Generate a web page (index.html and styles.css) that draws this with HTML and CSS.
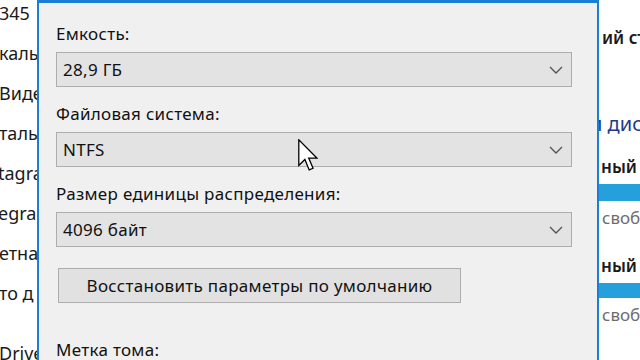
FILE: index.html
```html
<!DOCTYPE html>
<html lang="ru">
<head>
  <meta charset="UTF-8">
  <title>Форматирование</title>
  <link rel="stylesheet" href="styles.css">
</head>
<body>

  <div class="screen">

    <div class="behind-left">
      <div class="item">345</div>
      <div class="item">кальн</div>
      <div class="item">Виде</div>
      <div class="item">таль</div>
      <div class="item shift">tagra</div>
      <div class="item shift">egra</div>
      <div class="item">етна</div>
      <div class="item">то д</div>
      <div class="item drive">Drive</div>
    </div>

    <div class="dialog">
      <div class="field">
        <div class="label">Емкость:</div>
        <div class="combo">
          <span>28,9 ГБ</span>
          <svg class="chevron" width="14" height="8" viewBox="0 0 14 8"><path d="M1 1 L7 7 L13 1" fill="none" stroke="#555" stroke-width="1.4"/></svg>
        </div>
      </div>

      <div class="field">
        <div class="label">Файловая система:</div>
        <div class="combo">
          <span>NTFS</span>
          <svg class="chevron" width="14" height="8" viewBox="0 0 14 8"><path d="M1 1 L7 7 L13 1" fill="none" stroke="#555" stroke-width="1.4"/></svg>
        </div>
      </div>

      <div class="field">
        <div class="label">Размер единицы распределения:</div>
        <div class="combo">
          <span>4096 байт</span>
          <svg class="chevron" width="14" height="8" viewBox="0 0 14 8"><path d="M1 1 L7 7 L13 1" fill="none" stroke="#555" stroke-width="1.4"/></svg>
        </div>
      </div>

      <div class="restore">Восстановить параметры по умолчанию</div>

      <div class="label volume">Метка тома:</div>

      <!-- mouse pointer over the file system combo -->
      <svg class="cursor" width="20" height="32" viewBox="0 0 12.5 20">
        <path d="M0.5 0.5 L0.5 16.5 L4.3 12.8 L7 19.3 L9.4 18.3 L6.7 11.9 L11.8 11.9 Z" fill="#fff" stroke="#000" stroke-width="0.8" stroke-linejoin="miter"/>
      </svg>
    </div>

    <div class="behind-right">
      <div class="folder">ий сто</div>
      <div class="heading">и диски</div>
      <div class="disk">
        <div class="disk-name">ный</div>
        <div class="bar"></div>
        <div class="free">свобо</div>
      </div>
      <div class="disk">
        <div class="disk-name">ный</div>
        <div class="bar"></div>
        <div class="free">свобо</div>
      </div>
    </div>

  </div>

</body>
</html>
```

FILE: styles.css
```css
body {
  margin: 0;
  font-family: "Noto Sans", "Open Sans", sans-serif;
  background: #fff;
  color: #1a1a1a;
}

.screen {
  display: flex;
  width: 640px;
  height: 360px;
  overflow: hidden;
}

/* explorer window behind the dialog */
.behind-left {
  width: 37px;
  flex-shrink: 0;
  overflow: hidden;
  white-space: nowrap;
  font-size: 18px;
}

.item {
  height: 40px;
  line-height: 40px;
  margin-left: -1px;
}

.item:first-child {
  margin-top: -7px;
}

.item.shift {
  margin-left: -2px;
}

.item.drive {
  margin-top: 20px;
}

.behind-right {
  width: 41px;
  flex-shrink: 0;
  overflow: hidden;
  white-space: nowrap;
  font-size: 17px;
}

.folder {
  font-weight: 600;
  margin-top: 27px;
  margin-left: 3px;
  line-height: 22px;
}

.heading {
  color: #1f3a8a;
  font-size: 20px;
  margin-top: 62px;
  margin-left: -9px;
  line-height: 26px;
}

.disk-name {
  font-weight: 600;
  margin-left: 2px;
  line-height: 22px;
  margin-top: 19px;
}

.bar {
  height: 17px;
  background: #26a0da;
  margin-top: 6px;
}

.free {
  color: #6d6d6d;
  margin-left: 3px;
  line-height: 22px;
  margin-top: 6px;
}

.disk + .disk .disk-name {
  margin-top: 26px;
}

.disk + .disk .bar {
  height: 15px;
}

/* format dialog */
.dialog {
  position: relative;
  width: 541px;
  flex-shrink: 0;
  background: #f0f0f0;
  border-left: 2px solid #1a7fd4;
  border-right: 2px solid #1a7fd4;
  border-top: 3px solid #1a7fd4;
  padding: 4px 0 0 17px;
  font-size: 17px;
  letter-spacing: 0.3px;
  color: #111;
}

.label {
  padding-top: 17px;
  line-height: 20px;
  margin-bottom: 8px;
}

.combo {
  display: flex;
  align-items: center;
  justify-content: space-between;
  width: 500px;
  height: 33px;
  background: #e3e3e3;
  border: 1px solid #adadad;
  padding: 0 8px 0 6px;
}

.combo span {
  flex: 1;
}

.chevron {
  margin-top: 1px;
}

.restore {
  width: 401px;
  height: 33px;
  line-height: 33px;
  margin: 21px 0 0 2px;
  background: #e1e1e1;
  border: 1px solid #adadad;
  text-align: center;
}

.label.volume {
  padding-top: 0;
  margin-top: 37px;
}

.cursor {
  position: absolute;
  left: 259px;
  top: 136px;
}
```
